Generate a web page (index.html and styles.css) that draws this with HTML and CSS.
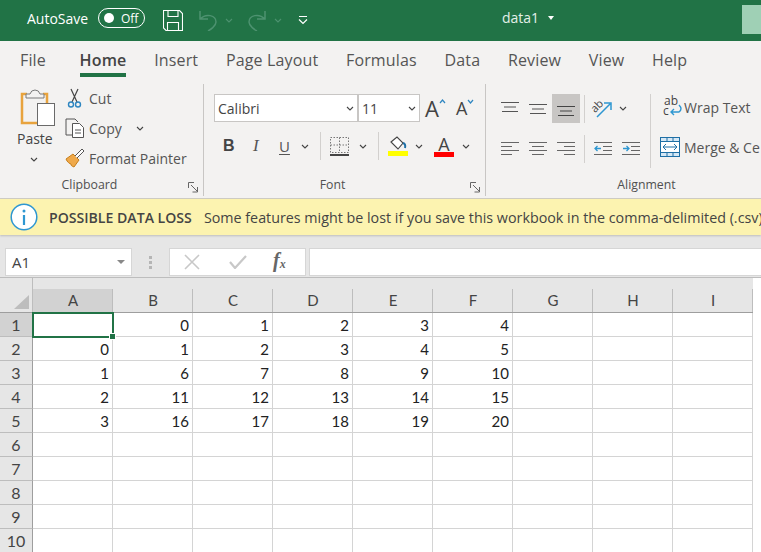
FILE: index.html
```html
<!DOCTYPE html>
<html lang="en">
<head>
<meta charset="utf-8">
<title>data1 - Excel</title>
<link rel="stylesheet" href="styles.css">
</head>
<body>
<div class="app">
  <header class="titlebar">
    <div class="qat">
      <span class="autosave">AutoSave</span>
      <span class="toggle"><i class="knob"></i><span>Off</span></span>
      <svg class="i-save" width="20" height="21" viewBox="0 0 20 21"><path d="M.5.5h16l3 3v17H3l-2.500-2.500z M5 .5v6h10v-6 M4.500 20.500v-8h11v8" fill="none" stroke="#fff" stroke-width="1.100"/></svg>
      <svg class="i-undo" width="20" height="21" viewBox="0 0 20 21"><path d="M2 1v8h8 M2 9C8 3 18 5 18 12C18 16 12 20 10 21" fill="none" stroke="#4d9270" stroke-width="1.500"/></svg>
      <svg class="i-chev" width="8" height="5" viewBox="0 0 8 5"><path d="M1 1l3 3 3-3" fill="none" stroke="#4d9270" stroke-width="1.100"/></svg>
      <svg class="i-redo" width="20" height="21" viewBox="0 0 20 21"><path d="M18 1v8h-8 M18 9C12 3 2 5 2 12C2 16 8 20 10 21" fill="none" stroke="#4d9270" stroke-width="1.500"/></svg>
      <svg class="i-chev" width="8" height="5" viewBox="0 0 8 5"><path d="M1 1l3 3 3-3" fill="none" stroke="#4d9270" stroke-width="1.100"/></svg>
      <svg class="i-custom" width="10" height="9" viewBox="0 0 10 9"><path d="M1 .5h8" stroke="#fff" fill="none"/><path d="M1 3.500l4 4 4-4" stroke="#fff" fill="none" stroke-width="1.200"/></svg>
    </div>
    <div class="doc">data1<i class="caret"></i></div>
    <div class="account"></div>
  </header>

  <nav class="tabs">
    <span>File</span><span class="active">Home</span><span>Insert</span><span>Page Layout</span><span>Formulas</span><span>Data</span><span>Review</span><span>View</span><span>Help</span>
  </nav>

  <section class="ribbon">
    <div class="group g-clip">
      <div class="group-body clip-body">
        <div class="paste">
          <svg width="37" height="38" viewBox="0 0 37 38"><path d="M8 6H3v29h15" fill="none" stroke="#e8a33d" stroke-width="2.500"/><path d="M24 6h4v9" fill="none" stroke="#e8a33d" stroke-width="2.500"/><path d="M7 10V6h4q1-4 5-4t5 4h4v4z" fill="#f3f2f1" stroke="#7a7a7a"/><rect x="18.500" y="15.500" width="17" height="22" fill="#fff" stroke="#6a6a6a"/></svg>
          <span class="paste-label">Paste</span>
          <svg class="paste-chev" width="8" height="5" viewBox="0 0 8 5"><path d="M1 1l3 3 3-3" fill="none" stroke="#444" stroke-width="1.100"/></svg>
        </div>
        <div class="clip-list">
          <div class="clip-row">
            <svg width="20" height="20" viewBox="0 0 20 20"><path d="M6 1l6 13M13 1L7 14" stroke="#444" fill="none" stroke-width="1.200"/><circle cx="6" cy="16.500" r="2.500" fill="none" stroke="#2e86c1" stroke-width="1.400"/><circle cx="13" cy="16.500" r="2.500" fill="none" stroke="#2e86c1" stroke-width="1.400"/></svg>
            <span>Cut</span>
          </div>
          <div class="clip-row">
            <svg width="20" height="20" viewBox="0 0 20 20"><path d="M7 17H1V1h9l3 3" fill="#f3f2f1" stroke="#555"/><path d="M7.500 5.500h7l4 4v10h-11z" fill="#fff" stroke="#555"/><path d="M10 12h6M10 15h6" stroke="#555"/></svg>
            <span>Copy</span>
            <svg class="copy-chev" width="8" height="5" viewBox="0 0 8 5"><path d="M1 1l3 3 3-3" fill="none" stroke="#444" stroke-width="1.100"/></svg>
          </div>
          <div class="clip-row">
            <svg width="20" height="20" viewBox="0 0 20 20"><path d="M1 11l7-5 6 6-5 7c-2-1-3-1-3-3 -1 0-4-2-5-5z" fill="#efa94a" stroke="#c77f1c"/><path d="M10 8l7-7 2 2-7 7" fill="#fff" stroke="#555"/></svg>
            <span>Format Painter</span>
          </div>
        </div>
      </div>
      <div class="group-label label-clip">Clipboard</div>
      <svg class="launcher" width="11" height="11" viewBox="0 0 11 11"><path d="M.5 6V.5H6 M3 3l6 6M9.500 5v5h-5" fill="none" stroke="#666"/></svg>
    </div>

    <div class="group g-font">
      <div class="group-body font-body">
        <div class="font-row-a">
          <div class="combo combo-font"><span>Calibri</span><svg width="8" height="5" viewBox="0 0 8 5"><path d="M1 1l3 3 3-3" fill="none" stroke="#444" stroke-width="1.100"/></svg></div>
          <div class="combo combo-size"><span>11</span><svg width="8" height="5" viewBox="0 0 8 5"><path d="M1 1l3 3 3-3" fill="none" stroke="#444" stroke-width="1.100"/></svg></div>
          <span class="grow-a">A<svg width="7" height="5" viewBox="0 0 7 5"><path d="M1 4l2.500-3L6 4" fill="none" stroke="#2e86c1" stroke-width="1.200"/></svg></span>
          <span class="shrink-a">A<svg width="7" height="5" viewBox="0 0 7 5"><path d="M1 1l2.500 3L6 1" fill="none" stroke="#2e86c1" stroke-width="1.200"/></svg></span>
        </div>
        <div class="font-row-b">
          <b class="fmt-b">B</b>
          <i class="fmt-i">I</i>
          <span class="fmt-u">U</span>
          <svg class="chev-a" width="8" height="5" viewBox="0 0 8 5"><path d="M1 1l3 3 3-3" fill="none" stroke="#444" stroke-width="1.100"/></svg>
          <i class="sep sep-a"></i>
          <svg class="i-border" width="19" height="19" viewBox="0 0 19 19"><path d="M.5.500h18v15H.5zM9.500.5v15M.5 8h18" fill="none" stroke="#777" stroke-dasharray="1.500 1.500"/><path d="M0 18h19" stroke="#444" stroke-width="2"/></svg>
          <svg class="chev-a" width="8" height="5" viewBox="0 0 8 5"><path d="M1 1l3 3 3-3" fill="none" stroke="#444" stroke-width="1.100"/></svg>
          <i class="sep sep-b"></i>
          <svg class="i-fill" width="20" height="20" viewBox="0 0 20 20"><path d="M3 6l6-5 6 6-5 6z" fill="#fff" stroke="#444" stroke-width="1.100"/><path d="M15 7q3 1 2 5" stroke="#1f6fa5" stroke-width="2" fill="none"/><rect y="15" width="20" height="5" fill="#ffff00"/></svg>
          <svg class="chev-a" width="8" height="5" viewBox="0 0 8 5"><path d="M1 1l3 3 3-3" fill="none" stroke="#444" stroke-width="1.100"/></svg>
          <span class="color-a">A</span>
          <svg class="chev-a" width="8" height="5" viewBox="0 0 8 5"><path d="M1 1l3 3 3-3" fill="none" stroke="#444" stroke-width="1.100"/></svg>
        </div>
      </div>
      <div class="group-label label-font">Font</div>
      <svg class="launcher" width="11" height="11" viewBox="0 0 11 11"><path d="M.5 6V.5H6 M3 3l6 6M9.500 5v5h-5" fill="none" stroke="#666"/></svg>
    </div>

    <div class="group g-align">
      <div class="group-body align-body">
        <div class="align-left">
          <div class="align-row">
            <span class="a-cell"><svg width="18" height="16" viewBox="0 0 18 16"><path d="M0 2.500h18M3 7h12M1 11.500h16" stroke="#555" fill="none" transform="translate(0 -1)"/></svg></span>
            <span class="a-cell"><svg width="18" height="16" viewBox="0 0 18 16"><path d="M0 3.500h18M3 8h12M1 12.500h16" stroke="#555" fill="none"/></svg></span>
            <span class="a-cell a-on"><svg width="18" height="16" viewBox="0 0 18 16"><path d="M0 5.500h18M3 10h12M1 14.500h16" stroke="#444" fill="none"/></svg></span>
            <i class="sep"></i>
            <span class="orient"><svg class="i-orient" width="22" height="20" viewBox="0 0 22 20"><text class="ab" x="0" y="11" transform="rotate(-45 6 8)">ab</text><path d="M6 18L19 5M13 4h7v7" stroke="#2e97d1" stroke-width="1.500" fill="none"/></svg><svg width="8" height="5" viewBox="0 0 8 5"><path d="M1 1l3 3 3-3" fill="none" stroke="#444" stroke-width="1.100"/></svg></span>
          </div>
          <div class="align-row">
            <span class="a-cell"><svg width="18" height="16" viewBox="0 0 18 16"><path d="M0 1.500h18M0 5.500h11M0 9.500h18M0 13.500h11" stroke="#666" fill="none"/></svg></span>
            <span class="a-cell"><svg width="18" height="16" viewBox="0 0 18 16"><path d="M0 1.500h18M3 5.500h12M0 9.500h18M3 13.500h12" stroke="#666" fill="none"/></svg></span>
            <span class="a-cell"><svg width="18" height="16" viewBox="0 0 18 16"><path d="M0 1.500h18M7 5.500h11M0 9.500h18M7 13.500h11" stroke="#666" fill="none"/></svg></span>
            <i class="sep"></i>
            <span class="a-cell"><svg width="18" height="16" viewBox="0 0 18 16"><path d="M0 1.500h18M9 5.500h9M9 9.500h9M0 13.500h18" stroke="#666" fill="none"/><path d="M7 7.500H1M3.500 5L1 7.500 3.500 10" stroke="#2e97d1" fill="none" stroke-width="1.300"/></svg></span>
            <span class="a-cell"><svg width="18" height="16" viewBox="0 0 18 16"><path d="M0 1.500h18M9 5.500h9M9 9.500h9M0 13.500h18" stroke="#666" fill="none"/><path d="M1 7.500h6M4.500 5L7 7.500 4.500 10" stroke="#2e97d1" fill="none" stroke-width="1.300"/></svg></span>
          </div>
        </div>
        <i class="sep sep-tall"></i>
        <div class="align-right">
          <div class="wm-row wrap-row"><svg class="i-wrap" width="20" height="22" viewBox="0 0 20 22"><text class="wrapab"><tspan x="1" y="9">ab</tspan><tspan x="0" y="19">c</tspan></text><path d="M16 9q4 4 0 7h-8M11 13l-3 3 3 3" stroke="#2e97d1" stroke-width="1.400" fill="none"/></svg><span>Wrap Text</span></div>
          <div class="wm-row merge-row"><svg width="20" height="20" viewBox="0 0 20 20"><rect x=".5" y=".5" width="19" height="19" fill="#d6e8f5" stroke="#1f6fa5"/><rect x="1" y="5" width="18" height="10" fill="#fff"/><path d="M0 4.500h20M0 15.500h20M7 .5v4M13 .5v4M7 16v4M13 16v4" stroke="#1f6fa5"/><path d="M3 10h14M6 7l-3 3 3 3M14 7l3 3-3 3" stroke="#1f6fa5" fill="none"/></svg><span>Merge &amp; Ce</span></div>
        </div>
      </div>
      <div class="group-label label-align">Alignment</div>
    </div>
  </section>

  <div class="msgbar">
    <svg width="28" height="28" viewBox="0 0 28 28"><circle cx="14" cy="14" r="12.800" fill="#fff" stroke="#2e97d1" stroke-width="1.500"/><circle cx="14" cy="8" r="1.500" fill="#2e97d1"/><path d="M14 12v10" stroke="#2e97d1" stroke-width="2.200"/></svg>
    <strong>POSSIBLE DATA LOSS</strong>
    <span>Some features might be lost if you save this workbook in the comma-delimited (.csv)</span>
  </div>

  <div class="formula">
    <div class="namebox"><span>A1</span><i class="nb-caret"></i></div>
    <div class="dots"><i></i><i></i><i></i></div>
    <div class="fx-box">
      <svg width="16" height="16" viewBox="0 0 16 16"><path d="M1 1l14 14M15 1L1 15" stroke="#c8c8c8" stroke-width="1.600"/></svg>
      <svg width="18" height="14" viewBox="0 0 18 14"><path d="M1 7l5 6L17 1" stroke="#c8c8c8" stroke-width="2.200" fill="none"/></svg>
      <span class="fx">f<sub>x</sub></span>
    </div>
    <div class="input"></div>
  </div>

  <div class="sheet" id="sheet">
    <div class="corner"><i></i></div>
    <div class="ch on">A</div><div class="ch">B</div><div class="ch">C</div><div class="ch">D</div><div class="ch">E</div><div class="ch">F</div><div class="ch">G</div><div class="ch">H</div><div class="ch">I</div>

    <div class="rh on">1</div><div class="c sel"><i class="handle"></i></div><div class="c">0</div><div class="c">1</div><div class="c">2</div><div class="c">3</div><div class="c">4</div><div class="c"></div><div class="c"></div><div class="c"></div>
    <div class="rh">2</div><div class="c">0</div><div class="c">1</div><div class="c">2</div><div class="c">3</div><div class="c">4</div><div class="c">5</div><div class="c"></div><div class="c"></div><div class="c"></div>
    <div class="rh">3</div><div class="c">1</div><div class="c">6</div><div class="c">7</div><div class="c">8</div><div class="c">9</div><div class="c">10</div><div class="c"></div><div class="c"></div><div class="c"></div>
    <div class="rh">4</div><div class="c">2</div><div class="c">11</div><div class="c">12</div><div class="c">13</div><div class="c">14</div><div class="c">15</div><div class="c"></div><div class="c"></div><div class="c"></div>
    <div class="rh">5</div><div class="c">3</div><div class="c">16</div><div class="c">17</div><div class="c">18</div><div class="c">19</div><div class="c">20</div><div class="c"></div><div class="c"></div><div class="c"></div>
    <div class="rh">6</div><div class="c"></div><div class="c"></div><div class="c"></div><div class="c"></div><div class="c"></div><div class="c"></div><div class="c"></div><div class="c"></div><div class="c"></div>
    <div class="rh">7</div><div class="c"></div><div class="c"></div><div class="c"></div><div class="c"></div><div class="c"></div><div class="c"></div><div class="c"></div><div class="c"></div><div class="c"></div>
    <div class="rh">8</div><div class="c"></div><div class="c"></div><div class="c"></div><div class="c"></div><div class="c"></div><div class="c"></div><div class="c"></div><div class="c"></div><div class="c"></div>
    <div class="rh">9</div><div class="c"></div><div class="c"></div><div class="c"></div><div class="c"></div><div class="c"></div><div class="c"></div><div class="c"></div><div class="c"></div><div class="c"></div>
    <div class="rh">10</div><div class="c"></div><div class="c"></div><div class="c"></div><div class="c"></div><div class="c"></div><div class="c"></div><div class="c"></div><div class="c"></div><div class="c"></div>
  </div>
</div>
</body>
</html>
```

FILE: styles.css
```css
* { box-sizing: border-box; }
html, body { margin: 0; height: 100%; overflow: hidden; background: #fff; }
body { font-family: "Open Sans", "Noto Sans", sans-serif; color: #444; }
svg { display: block; flex: none; }
.app { width: 761px; height: 552px; overflow: hidden; display: flex; flex-direction: column; }

/* Title bar */
.titlebar { height: 41px; flex: none; background: #217346; color: #fff; display: flex; align-items: flex-start; }
.qat { display: flex; align-items: center; padding: 3px 0 0 27px; width: 502px; height: 33px; flex: none; }
.autosave { font-size: 14px; width: 71px; }
.toggle { width: 47px; height: 20px; border: 1px solid #fff; border-radius: 10px; display: flex; align-items: center; padding-left: 5px; gap: 7px; font-size: 12px; }
.knob { width: 10px; height: 10px; background: #fff; border-radius: 50%; }
.i-save { margin: 5px 0 0 18px; }
.i-undo { margin: 5px 0 0 15px; }
.i-redo { margin: 5px 0 0 14px; }
.i-chev { margin: 4px 0 0 7px; }
.i-custom { margin: 5px 0 0 16px; }
.doc { font-size: 14px; width: 240px; padding-top: 8px; display: flex; align-items: center; color: #e3f0e9; flex: none; }
.caret { margin: 1px 0 0 9px; border: 3.500px solid transparent; border-top: 4px solid #fff; border-bottom: 0; }
.account { width: 19px; height: 29px; margin-top: 5px; background: #9fd0b5; flex: none; }

/* Tabs */
.tabs { height: 40px; flex: none; background: #f3f2f1; display: flex; gap: 27.700px; padding-left: 20px; font-size: 16px; letter-spacing: .15px; color: #555; }
.tabs span { height: 36px; line-height: 38px; white-space: nowrap; }
.tabs span:first-child { margin-right: 6px; }
.tabs .active { font-weight: 600; color: #444; border-bottom: 4px solid #217346; }

/* Ribbon */
.ribbon { height: 118px; flex: none; background: #f3f2f1; display: flex; border-bottom: 1px solid #d0cec5; }
.group { position: relative; display: flex; flex-direction: column; border-right: 1px solid #c8c6c4; flex: none; height: 112px; margin-top: 3px; }
.g-clip { width: 204px; }
.g-font { width: 282px; }
.g-align { width: 275px; border-right: 0; }
.group-body { flex: 1; }
.group-label { height: 20px; font-size: 12.300px; color: #505050; text-align: center; line-height: 18px; }
.launcher { position: absolute; right: 4px; bottom: 3px; }
.label-clip { padding-right: 24px; }
.label-font { padding-right: 24px; }
.label-align { padding-left: 46px; }

.clip-body { display: flex; padding: 4px 0 0 19px; }
.paste { width: 46px; display: flex; flex-direction: column; flex: none; }
.paste-label { font-size: 14px; line-height: 20px; margin: 3px 0 0 -2px; }
.paste-chev { margin: 8px 0 0 11px; }
.clip-list { display: flex; flex-direction: column; margin-top: -5px; }
.clip-row { height: 30px; display: flex; align-items: center; font-size: 14px; color: #555; }
.clip-row svg:first-child { margin-right: 4px; }
.copy-chev { margin-left: 14px; }

.font-body { padding: 10px 0 0 10px; }
.font-row-a { display: flex; align-items: center; height: 28px; }
.combo { height: 28px; background: #fff; border: 1px solid #c8c6c4; display: flex; align-items: center; justify-content: space-between; padding: 0 3px; font-size: 14px; color: #444; flex: none; }
.combo-font { width: 144px; }
.combo-size { width: 62px; }
.grow-a, .shrink-a { display: flex; align-items: flex-start; color: #444; }
.grow-a { font-size: 22px; margin-left: 5px; width: 31px; line-height: 28px; }
.shrink-a { font-size: 18px; line-height: 28px; }
.grow-a svg, .shrink-a svg { margin-top: 5px; }
.font-row-b { display: flex; align-items: center; height: 30px; margin-top: 9px; font-size: 15px; }
.fmt-b { margin-left: 9px; width: 27px; font-family: "Liberation Sans", sans-serif; font-size: 16px; }
.fmt-i { width: 27px; font-family: "Liberation Serif", serif; font-size: 17px; padding-left: 3px; color: #555; }
.fmt-u { width: 20px; padding-left: 2px; text-decoration: underline; text-underline-offset: 2px; color: #555; font-size: 15px; }
.chev-a { margin-left: 4px; }
.sep { width: 1px; height: 28px; background: #d2d0ce; display: block; flex: none; }
.sep-a { margin: 0 9px 0 11px; }
.sep-b { margin: 0 9px 0 11px; }
.i-border { margin-right: 6px; }
.i-fill { margin-right: 3px; }
.color-a { margin-left: 11px; width: 20px; font-size: 18px; line-height: 19px; text-align: center; border-bottom: 5px solid #f00; height: 22px; margin-right: 4px; }

.align-body { display: flex; padding: 10px 0 0 10px; }
.align-left { width: 154px; flex: none; display: flex; flex-direction: column; gap: 11px; }
.align-row { display: flex; align-items: center; height: 29px; }
.a-cell { width: 28px; height: 29px; display: flex; align-items: center; justify-content: center; }
.a-on { background: #c8c6c4; }
.align-row .sep { margin: 0 4px; }
.orient { display: flex; align-items: center; gap: 6px; margin-left: 2px; }
.i-orient { overflow: visible; }
.ab { font: 11px "Open Sans", sans-serif; fill: #444; }
.sep-tall { height: 74px; margin: 0 9px 0 0; }
.align-right { display: flex; flex-direction: column; gap: 10px; margin-top: -2px; flex: none; }
.wm-row { display: flex; align-items: center; height: 30px; font-size: 14px; color: #555; white-space: nowrap; gap: 4px; }
.wrap-row { padding-left: 3px; gap: 1px; }
.i-wrap { overflow: visible; }
.wrapab { font: 12px "Open Sans", sans-serif; fill: #444; }

/* Message bar */
.msgbar { height: 36px; flex: none; background: #fcf3b0; display: flex; align-items: center; padding-left: 10px; font-size: 14.300px; color: #444; white-space: nowrap; box-shadow: 0 1px 2px rgba(0,0,0,.18); position: relative; }
.msgbar strong { font-weight: 600; margin-left: 11px; margin-right: 12px; font-size: 14.100px; }

/* Formula bar */
.formula { height: 43px; flex: none; background: #e6e6e6; display: flex; padding: 13px 0 1px 5px; border-bottom: 1px solid #bdbdbd; }
.namebox { width: 127px; background: #fff; border: 1px solid #d6d6d6; display: flex; align-items: center; justify-content: space-between; padding: 0 6px; font-size: 15px; color: #444; }
.nb-caret { border: 4px solid transparent; border-top: 4px solid #888; border-bottom: 0; }
.dots { width: 37px; display: flex; flex-direction: column; align-items: center; justify-content: center; gap: 2px; }
.dots i { width: 3px; height: 3px; background: #b5b5b5; }
.fx-box { width: 137px; background: #fff; border: 1px solid #d6d6d6; display: flex; align-items: center; padding-left: 14px; gap: 29px; }
.fx { font-family: "Liberation Serif", serif; font-style: italic; font-weight: bold; font-size: 20px; color: #666; line-height: 20px; margin-left: -3px; }
.fx sub { font-size: 12px; vertical-align: -1px; }
.input { flex: 1; margin-left: 3px; background: #fff; border: 1px solid #d6d6d6; border-right: 0; }

/* Sheet */
.sheet { flex: 1; display: grid; grid-template-columns: 33px repeat(9, 80px); grid-template-rows: 35px repeat(10, 24px); font-family: Lato, "Liberation Sans", sans-serif; background: #fff; position: relative; }
.corner { background: #e6e6e6; border-right: 1px solid #bdbdbd; border-bottom: 1px solid #9e9e9e; position: relative; }
.corner i { position: absolute; left: 14px; bottom: 3px; width: 0; height: 0; border-left: 15px solid transparent; border-bottom: 14px solid #bdbdbd; }
.ch { background: #e6e6e6; border-bottom: 1px solid #9e9e9e; font-size: 15px; color: #444; text-align: center; padding-top: 10px; line-height: 24px; position: relative; }
.ch::after { content: ""; position: absolute; right: 0; top: 11px; bottom: 0; width: 1px; background: #bdbdbd; }
.ch.on { background: linear-gradient(#e6e6e6 11px, #d2d2d2 11px); }
.rh { background: #e6e6e6; border-right: 1px solid #9e9e9e; border-bottom: 1px solid #bdbdbd; font-size: 16px; color: #444; text-align: center; line-height: 24px; }
.rh.on { background: #d2d2d2; }
.c { border-right: 1px solid #d4d4d4; border-bottom: 1px solid #d4d4d4; font-size: 15px; color: #222; text-align: right; padding-right: 3px; line-height: 25px; position: relative; }
.sel { outline: 2px solid #217346; outline-offset: -1px; z-index: 1; }
.handle { position: absolute; right: -3px; bottom: -3px; width: 5px; height: 5px; background: #217346; box-shadow: 0 0 0 1px #fff; }
```
